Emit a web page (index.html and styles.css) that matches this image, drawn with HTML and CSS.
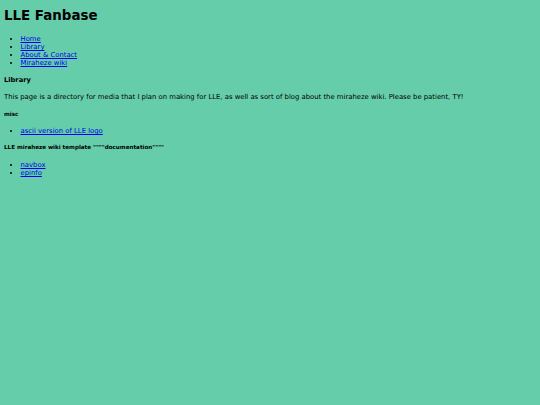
FILE: index.html
```html
<!DOCTYPE html>
<html>
<head>
<meta charset="utf-8">
<title>LLE Fanbase</title>
<link rel="stylesheet" href="styles.css">
</head>
<body>
<h1 class="title">LLE Fanbase</h1>
<ul class="nav">
  <li><a href="#">Home</a></li>
  <li><a href="#">Library</a></li>
  <li><a href="#">About &amp; Contact</a></li>
  <li><a href="#">Miraheze wiki</a></li>
</ul>
<h4 class="section">Library</h4>
<p class="intro">This page is a directory for media that I plan on making for LLE, as well as sort of blog about the miraheze wiki. Please be patient, TY!</p>
<h5 class="sub">misc</h5>
<ul class="list">
  <li><a href="#">ascii version of LLE logo</a></li>
</ul>
<h5 class="sub">LLE miraheze wiki template """"documentation""""</h5>
<ul class="list">
  <li><a href="#">navbox</a></li>
  <li><a href="#">epinfo</a></li>
</ul>
</body>
</html>
```
FILE: styles.css
```css
html {
  background: #66cdaa;
}
body {
  margin: 0 4px;
  padding-top: 1px;
  font-family: "DejaVu Sans", Verdana, sans-serif;
  font-size: 6.85px;
  line-height: 8px;
  color: #000;
  background: #66cdaa;
}
a {
  color: #0000ee;
}
.title {
  font-size: 13.4px;
  line-height: 16px;
  margin: 7px 0 11px;
}
.nav, .list {
  margin: 0;
  padding-left: 16.5px;
}
.section {
  font-size: 6.7px;
  line-height: 8px;
  margin: 8.5px 0 9.3px;
}
.intro {
  margin: 0;
}
.sub {
  font-size: 5.6px;
  line-height: 7px;
  margin: 10.1px 0 9.6px;
}
.list + .sub {
  margin-top: 9px;
}
```
